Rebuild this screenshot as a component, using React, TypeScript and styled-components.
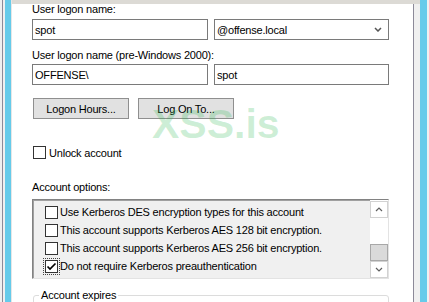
import React from "react";
import styled, { createGlobalStyle } from "styled-components";

const GlobalStyle = createGlobalStyle`
  html, body {
    margin: 0;
    padding: 0;
    width: 429px;
    height: 302px;
    overflow: hidden;
    background: #fff;
  }
  body {
    font-family: "Liberation Sans", Arial, sans-serif;
    font-size: 11px;
    letter-spacing: -0.2px;
    color: #000;
  }
`;

const Frame = styled.div`
  position: relative;
  display: flex;
  width: 429px;
  height: 302px;
  overflow: hidden;
  background: #fff;
`;

const LeftEdge = styled.div`
  flex: none;
  width: 12px;
  background: linear-gradient(
    to right,
    #f0f0f0 0 2px,
    #8c8a99 2px 3px,
    #f0f0f0 3px 5px,
    #66cbea 5px 11px,
    #e6e6e6 11px 12px
  );
`;

const RightEdge = styled.div`
  flex: none;
  width: 16px;
  background: linear-gradient(#dcdad5, #dcdad5) 0 0 / 7px 4px no-repeat,
    linear-gradient(
      to right,
      #8c8a99 0 1px,
      #f0f0f0 1px 7px,
      #66cbea 7px 14px,
      #f0f0f0 14px 16px
    );
`;

const Dialog = styled.div`
  flex: 1;
  display: flex;
  flex-direction: column;
  padding: 0 24px 0 20px;
  min-width: 0;

  & > * {
    flex-shrink: 0;
  }
`;

const TopBand = styled.div`
  height: 4px;
  margin: 0 -24px 0 -20px;
  background: #dcdad5;
`;

const Label = styled.div<{ $mt: number; $mb: number }>`
  line-height: 14px;
  white-space: nowrap;
  margin-top: ${(p) => p.$mt}px;
  margin-bottom: ${(p) => p.$mb}px;
`;

const FieldRow = styled.div`
  display: grid;
  grid-template-columns: 176px 1fr;
  gap: 6px;
`;

const TextBox = styled.div`
  height: 21px;
  box-sizing: border-box;
  border: 1px solid #7a7a7a;
  padding: 0 2px;
  display: flex;
  align-items: center;
  justify-content: space-between;
  background: #fff;
  white-space: nowrap;
`;

const Chevron = styled.svg`
  margin-right: 4px;
`;

const ButtonRow = styled.div`
  display: flex;
  gap: 9px;
  margin-top: 13px;
  padding-left: 1px;
`;

const Button = styled.div`
  width: 96px;
  height: 21px;
  box-sizing: border-box;
  background: #e1e1e1;
  border: 1px solid #8f8f8f;
  display: flex;
  align-items: center;
  justify-content: center;
  white-space: nowrap;
`;

const CheckRow = styled.div`
  display: flex;
  align-items: center;
  gap: 3px;
  height: 13px;
  margin-top: 27px;
  padding-left: 1px;
`;

const Box = styled.div<{ $focus?: boolean }>`
  width: 13px;
  height: 13px;
  box-sizing: border-box;
  border: 1px solid #333;
  background: #fff;
  display: flex;
  align-items: center;
  justify-content: center;
  flex: none;
  outline: ${(p) => (p.$focus ? "1px dotted #444" : "none")};
  outline-offset: 1px;
`;

const ListBox = styled.div`
  height: 80px;
  box-sizing: border-box;
  display: flex;
  border: 1px solid;
  border-color: #828282 #e3e3e3 #e3e3e3 #828282;
  box-shadow: inset 1px 1px 0 #a0a0a0;
  background: #f0f0f0;
`;

const Items = styled.div`
  flex: 1;
  padding-top: 3px;
`;

const Item = styled.div`
  height: 18px;
  display: flex;
  align-items: center;
  gap: 2px;
  padding-left: 12px;
  white-space: nowrap;
`;

const Scrollbar = styled.div`
  width: 18px;
  display: flex;
  flex-direction: column;
  padding-top: 1px;
  background: #fff;
`;

const ArrowBox = styled.div`
  height: 17px;
  box-sizing: border-box;
  border: 1px solid #d2d2d2;
  background: #fff;
  display: flex;
  align-items: center;
  justify-content: center;
`;

const Track = styled.div`
  flex: 1;
  display: flex;
  flex-direction: column;
  justify-content: flex-end;
  background: #fff;
`;

const Thumb = styled.div`
  height: 17px;
  box-sizing: border-box;
  background: #dadada;
  border: 1px solid #a8a8a8;
`;

const GroupBox = styled.fieldset`
  margin: 9px 0 0 1px;
  width: 356px;
  height: 40px;
  box-sizing: border-box;
  border: 1px solid #dcdcdc;
  border-radius: 3px;
  padding: 0 6px 0 5px;
  min-width: 0;
`;

const Legend = styled.legend`
  padding: 0 2px;
  line-height: 14px;
`;

const Watermark = styled.div`
  position: absolute;
  left: 152px;
  top: 104px;
  font-family: "Liberation Sans", Arial, sans-serif;
  font-weight: bold;
  font-size: 41px;
  line-height: 40px;
  letter-spacing: 0;
  color: rgba(30, 180, 70, 0.22);
  pointer-events: none;
`;

const Check = () => (
  <svg width="11" height="11" viewBox="0 0 11 11">
    <path d="M1.5 5.5 L4 8 L9.5 2.5" fill="none" stroke="#000" strokeWidth="1.7" />
  </svg>
);

const Arrow = ({ up }: { up?: boolean }) => (
  <svg width="8" height="5" viewBox="0 0 8 5">
    <polyline
      points={up ? "1,4 4,1 7,4" : "1,1 4,4 7,1"}
      fill="none"
      stroke="#606060"
      strokeWidth="1.2"
    />
  </svg>
);

const options = [
  { text: "Use Kerberos DES encryption types for this account", checked: false },
  { text: "This account supports Kerberos AES 128 bit encryption.", checked: false },
  { text: "This account supports Kerberos AES 256 bit encryption.", checked: false },
  { text: "Do not require Kerberos preauthentication", checked: true },
];

const App = () => {
  return (
    <>
      <GlobalStyle />
      <Frame>
        <LeftEdge />
        <Dialog>
          <TopBand />
          <Label $mt={-2} $mb={3}>User logon name:</Label>
          <FieldRow>
            <TextBox>spot</TextBox>
            <TextBox>
              <span>@offense.local</span>
              <Chevron width="8" height="5" viewBox="0 0 8 5">
                <polyline points="1,1 4,4 7,1" fill="none" stroke="#555" strokeWidth="1.5" />
              </Chevron>
            </TextBox>
          </FieldRow>
          <Label $mt={8} $mb={2}>User logon name (pre-Windows 2000):</Label>
          <FieldRow>
            <TextBox>OFFENSE\</TextBox>
            <TextBox>spot</TextBox>
          </FieldRow>
          <ButtonRow>
            <Button>Logon Hours...</Button>
            <Button>Log On To...</Button>
          </ButtonRow>
          <CheckRow>
            <Box />
            <span>Unlock account</span>
          </CheckRow>
          <Label $mt={21} $mb={5}>Account options:</Label>
          <ListBox>
            <Items>
              {options.map((o) => (
                <Item key={o.text}>
                  <Box $focus={o.checked}>{o.checked && <Check />}</Box>
                  <span>{o.text}</span>
                </Item>
              ))}
            </Items>
            <Scrollbar>
              <ArrowBox>
                <Arrow up />
              </ArrowBox>
              <Track>
                <Thumb />
              </Track>
              <ArrowBox>
                <Arrow />
              </ArrowBox>
            </Scrollbar>
          </ListBox>
          <GroupBox>
            <Legend>Account expires</Legend>
          </GroupBox>
        </Dialog>
        <RightEdge />
        <Watermark>XSS.is</Watermark>
      </Frame>
    </>
  );
};

export default App;
